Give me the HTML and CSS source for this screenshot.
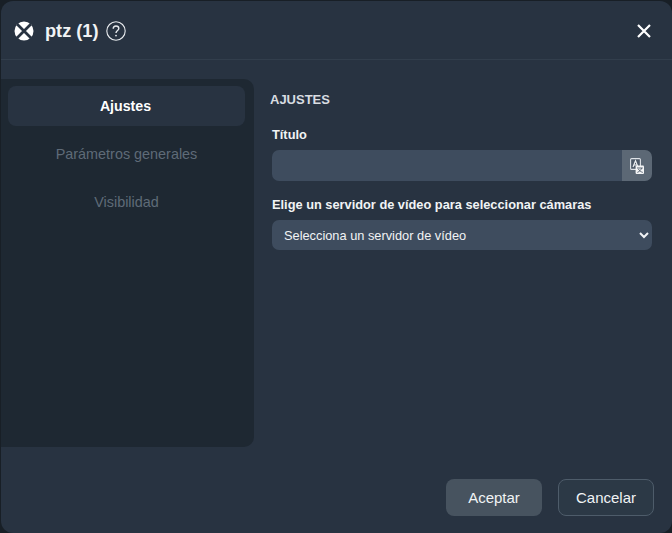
FILE: index.html
```html
<!DOCTYPE html>
<html lang="es">
<head>
  <meta charset="UTF-8" />
  <title>ptz (1)</title>
  <link rel="stylesheet" href="styles.css">
</head>
<body>
  <div class="dialog">
    <header class="dialog-header">
      <svg class="widget-icon" viewBox="0 0 20 20" width="20" height="20">
        <circle cx="10" cy="10" r="9.5" fill="#fff"/>
        <path d="M3 3 L17 17 M17 3 L3 17" stroke="#283341" stroke-width="2.8"/>
      </svg>
      <h2>ptz (1)</h2>
      <svg class="help-icon" viewBox="0 0 20 20" width="20" height="20">
        <circle cx="10" cy="10" r="9.2" fill="none" stroke="#e8ebee" stroke-width="1.1"/>
        <path d="M7.2 7.8 C7.2 6 8.5 5 10 5 C11.6 5 12.8 6 12.8 7.5 C12.8 9.5 10 9.6 10 12" fill="none" stroke="#e8ebee" stroke-width="1.4"/>
        <circle cx="10" cy="14.6" r="0.9" fill="#e8ebee"/>
      </svg>
      <button class="close-btn" aria-label="Cerrar">
        <svg viewBox="0 0 14 14" width="14" height="14">
          <path d="M1 1 L13 13 M13 1 L1 13" stroke="#fff" stroke-width="2.2"/>
        </svg>
      </button>
    </header>

    <div class="dialog-body">
      <nav class="sidenav">
        <div class="nav-item active">Ajustes</div>
        <div class="nav-item">Parámetros generales</div>
        <div class="nav-item">Visibilidad</div>
      </nav>

      <section class="settings">
        <h3>AJUSTES</h3>
        <label class="field-label">Título</label>
        <div class="input-group">
          <input type="text" />
          <span class="translate-btn">
            <svg viewBox="0 0 14 16" width="14" height="16">
              <rect x="0.6" y="0.6" width="9.8" height="10.8" rx="1" fill="#4d5967" stroke="#dfe3e7" stroke-width="1.1"/>
              <path d="M3 9 L5.5 2.8 L8 9 M3.9 7 H7.1" fill="none" stroke="#f1f3f5" stroke-width="1.1"/>
              <rect x="5.6" y="7.4" width="8.4" height="8.6" rx="1" fill="#f4f5f6"/>
              <path d="M7 10 H12.8 M11.6 10 C11 12 9.6 13.4 7.4 14.4 M8.4 11 C9.4 12.8 10.8 13.8 12.8 14.4" fill="none" stroke="#4d5967" stroke-width="0.9"/>
            </svg>
          </span>
        </div>
        <label class="field-label server-label">Elige un servidor de vídeo para seleccionar cámaras</label>
        <select class="server-select">
          <option>Selecciona un servidor de vídeo</option>
        </select>
      </section>
    </div>

    <footer class="dialog-footer">
      <button class="btn btn-primary">Aceptar</button>
      <button class="btn btn-outline">Cancelar</button>
    </footer>
  </div>
</body>
</html>
```

FILE: styles.css
```css
* {
  box-sizing: border-box;
  font-family: 'Liberation Sans', Arial, sans-serif;
}
html, body {
  margin: 0;
  height: 100%;
  background: #181f26;
}
body {
  padding: 1px 0 0 1px;
  overflow: hidden;
}

.dialog {
  height: 532px;
  width: 671px;
  background: #283341;
  border-radius: 12px;
  color: white;
  display: flex;
  flex-direction: column;
}

/* === Header === */
.dialog-header {
  height: 59px;
  flex: none;
  display: flex;
  align-items: center;
  padding: 2px 21px 0 13px;
  border-bottom: 1px solid #323e4c;
}
.widget-icon { flex: none; }
.dialog-header h2 {
  margin: 0 7px 0 11px;
  font-size: 18.2px;
  font-weight: 700;
  color: #f1f3f5;
}
.help-icon { flex: none; }
.close-btn {
  margin-left: auto;
  padding: 0;
  border: none;
  background: none;
  display: flex;
  cursor: pointer;
}

/* === Body === */
.dialog-body {
  flex: 1;
  display: flex;
  padding-top: 19px;
  min-height: 0;
}
.sidenav {
  width: 253px;
  height: 368px;
  flex: none;
  background: #1e2832;
  border-radius: 0 10px 10px 0;
  padding: 7px 9px 0 7px;
  display: flex;
  flex-direction: column;
  gap: 8px;
}
.nav-item {
  height: 40px;
  display: flex;
  align-items: center;
  justify-content: center;
  border-radius: 8px;
  font-size: 14.4px;
  color: #5f6b78;
}
.nav-item.active {
  background: #283341;
  color: #fff;
  font-size: 14.2px;
  font-weight: 700;
  padding-right: 2px;
}
.settings {
  flex: 1;
  padding: 0 20px 0 18px;
}
.settings h3 {
  margin: 13px 0 0 -2px;
  font-size: 13px;
  line-height: 15px;
  font-weight: 700;
  color: #d9dde1;
}
.field-label {
  display: block;
  font-size: 12.8px;
  font-weight: 700;
  line-height: 15px;
  color: #f1f3f5;
  margin: 20px 0 8px;
}
.server-label { margin: 16px 0 8px; }
.input-group {
  display: flex;
  height: 31px;
}
.input-group input {
  flex: 1;
  min-width: 0;
  border: none;
  outline: none;
  background: #3e4c5e;
  border-radius: 7px 0 0 7px;
  color: white;
}
.translate-btn {
  width: 30px;
  flex: none;
  background: #5c6875;
  border-radius: 0 7px 7px 0;
  display: flex;
  align-items: center;
  justify-content: center;
}
.server-select {
  display: block;
  width: 100%;
  height: 30px;
  padding: 1px 8px 0;
  border: none;
  outline: none;
  background: #3e4c5e;
  border-radius: 7px;
  color: #f1f3f5;
  font-size: 12.8px;
  font-weight: 400;
}

/* === Footer === */
.dialog-footer {
  flex: none;
  display: flex;
  justify-content: flex-end;
  gap: 16px;
  padding: 0 18px 17px 0;
}
.btn {
  width: 96px;
  height: 37px;
  border-radius: 8px;
  font-size: 15px;
  cursor: pointer;
  color: #f1f3f5;
}
.btn-primary {
  background: #47535f;
  border: none;
}
.btn-outline {
  background: #2c3946;
  border: 1px solid #4e5c6a;
}
```
